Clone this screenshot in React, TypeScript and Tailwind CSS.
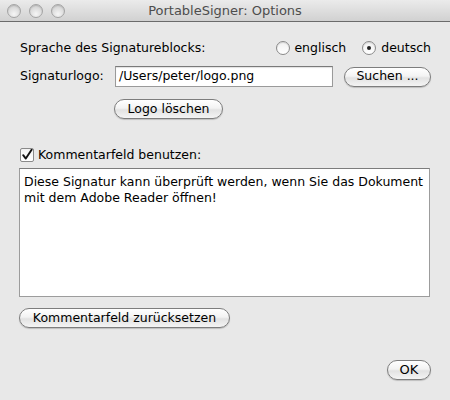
import React from "react";

const font = { fontFamily: '"DejaVu Sans", "Lucida Grande", Verdana, sans-serif' };

function Light() {
  return (
    <div className="w-[14px] h-[14px] rounded-full border border-[#a4a4a4] bg-[radial-gradient(circle_at_50%_75%,#f6f6f6_0%,#dcdcdc_55%,#c4c4c4_100%)] shadow-[inset_0_1px_1px_rgba(0,0,0,0.12)]" />
  );
}

function Btn({ children, className = "" }: { children: React.ReactNode; className?: string }) {
  return (
    <div
      className={
        "h-[20px] flex items-center justify-center rounded-full border border-[#7d7d7d] bg-[linear-gradient(to_bottom,#ffffff_0%,#f3f3f3_45%,#e2e2e2_55%,#f4f4f4_100%)] shadow-[0_1px_1px_rgba(0,0,0,0.18)] text-[12.5px] text-black " +
        className
      }
    >
      {children}
    </div>
  );
}

function Radio({ checked }: { checked?: boolean }) {
  return (
    <div className="w-[14px] h-[14px] rounded-full border border-[#8a8a8a] bg-[linear-gradient(to_bottom,#f0f0f0,#ffffff)] flex items-center justify-center shadow-[inset_0_1px_1px_rgba(0,0,0,0.12)]">
      {checked && <div className="w-[4px] h-[4px] rounded-full bg-[#222]" />}
    </div>
  );
}

export default function App() {
  return (
    <div style={font} className="w-[450px] h-[400px] bg-[#e8e8e8] flex flex-col text-[12.5px] text-black">
      {/* title bar */}
      <div className="h-[22px] shrink-0 relative flex items-center border-b border-[#6b6b6b] bg-[linear-gradient(to_bottom,#ebebeb,#d1d1d1)]">
        <div className="flex gap-[8px] pl-[7px] z-10">
          <Light />
          <Light />
          <Light />
        </div>
        <div className="absolute inset-0 flex items-center justify-center text-[13px] text-[#4d4d4d]">
          PortableSigner: Options
        </div>
      </div>

      <div className="flex flex-col px-[19px] pt-[17px]">
        {/* row 1 */}
        <div className="flex items-center h-[18px] pl-[1px]">
          <span>Sprache des Signatureblocks:</span>
          <div className="ml-auto flex items-center pr-[0px]">
            <Radio />
            <span className="ml-[4px]">englisch</span>
            <div className="w-[16px]" />
            <Radio checked />
            <span className="ml-[5px]">deutsch</span>
          </div>
        </div>

        {/* row 2 */}
        <div className="flex items-center mt-[9px] h-[21px]">
          <span className="pl-[1px] w-[96px]">Signaturlogo:</span>
          <div className="w-[218px] h-[21px] bg-white border border-[#9a9a9a] border-t-[#7a7a7a] shadow-[inset_0_1px_1px_rgba(0,0,0,0.12)] flex items-center pl-[3px]">
            /Users/peter/logo.png
          </div>
          <Btn className="ml-[11px] w-[87px]">Suchen ...</Btn>
        </div>

        {/* row 3 */}
        <div className="flex mt-[12px] pl-[95px]">
          <Btn className="w-[109px]">Logo löschen</Btn>
        </div>

        {/* checkbox */}
        <div className="flex items-center mt-[28px] h-[16px] pl-[1px]">
          <div className="w-[14px] h-[14px] border border-[#8a8a8a] rounded-[2px] bg-[linear-gradient(to_bottom,#f2f2f2,#ffffff)] flex items-center justify-center">
            <svg width="12" height="12" viewBox="0 0 12 12">
              <path d="M2.2 6.2 L4.8 9.6 L10.6 0.8" fill="none" stroke="#111" strokeWidth="1.9" strokeLinecap="round" strokeLinejoin="round" />
            </svg>
          </div>
          <span className="ml-[4px]">Kommentarfeld benutzen:</span>
        </div>

        {/* textarea */}
        <div className="mt-[5px] w-[411px] h-[129px] bg-white border border-[#9c9c9c] border-t-[#7c7c7c] px-[4px] pt-[5px] leading-[16px]">
          Diese Signatur kann überprüft werden, wenn Sie das Dokument mit dem Adobe Reader öffnen!
        </div>

        {/* reset */}
        <div className="flex mt-[11px]">
          <Btn className="w-[211px]">Kommentarfeld zurücksetzen</Btn>
        </div>

        {/* OK */}
        <div className="flex justify-end mt-[32px] pr-[0px]">
          <Btn className="w-[44px] text-[13px]">OK</Btn>
        </div>
      </div>
    </div>
  );
}
